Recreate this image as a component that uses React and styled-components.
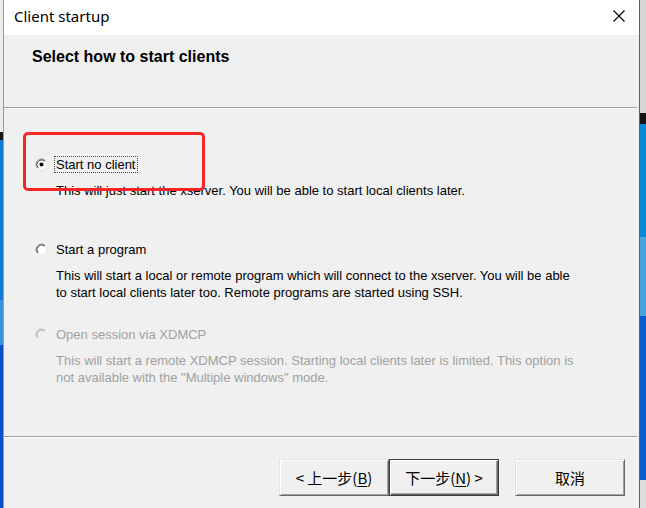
import React from 'react'
import styled, { createGlobalStyle } from 'styled-components'

const GlobalStyle = createGlobalStyle`
  html, body {
    margin: 0;
    padding: 0;
  }
  body {
    width: 646px;
    height: 508px;
    overflow: hidden;
    background: #0b4fc6;
    font-family: 'Liberation Sans', Arial, sans-serif;
  }
`

const options = [
  {
    id: 'none',
    label: 'Start no client',
    lines: ['This will just start the xserver. You will be able to start local clients later.'],
    checked: true,
    focused: true,
  },
  {
    id: 'program',
    label: 'Start a program',
    lines: [
      'This will start a local or remote program which will connect to the xserver. You will be able',
      'to start local clients later too. Remote programs are started using SSH.',
    ],
  },
  {
    id: 'xdmcp',
    label: 'Open session via XDMCP',
    lines: [
      'This will start a remote XDMCP session. Starting local clients later is limited. This option is',
      'not available with the "Multiple windows" mode.',
    ],
    disabled: true,
  },
]

const Radio = ({ checked, disabled }) => (
  <RadioMark width="13" height="13" viewBox="0 0 13 13">
    <circle cx="6.5" cy="6.5" r="5.5" fill={disabled ? '#f0f0f0' : '#fff'} />
    <path d="M2.61 10.39A5.5 5.5 0 0 1 10.39 2.61" fill="none" stroke={disabled ? '#bdbdbd' : '#8a8a8a'} />
    <path d="M10.39 2.61A5.5 5.5 0 0 1 2.61 10.39" fill="none" stroke={disabled ? '#f4f4f4' : '#e6e6e6'} />
    <path d="M3.32 9.68A4.5 4.5 0 0 1 9.68 3.32" fill="none" stroke={disabled ? '#a8a8a8' : '#404040'} />
    {checked && <circle cx="6.5" cy="6.5" r="2" fill="#000" />}
  </RadioMark>
)

const Option = ({ option }) => (
  <Choice>
    <Choice.Row>
      <Radio checked={option.checked} disabled={option.disabled} />
      <Choice.Label $focused={option.focused} $disabled={option.disabled}>
        {option.label}
      </Choice.Label>
    </Choice.Row>
    <Choice.Text $disabled={option.disabled}>
      {option.lines.map(line => (
        <div key={line}>{line}</div>
      ))}
    </Choice.Text>
  </Choice>
)

const App = () => (
  <Screen>
    <GlobalStyle />
    <DesktopEdge $side="left" />
    <Window>
      <Window.TitleBar>
        <Window.Title>Client startup</Window.Title>
        <Window.Close>
          <svg width="12" height="12" viewBox="0 0 12 12">
            <path d="M0.5 0.5L11.5 11.5M11.5 0.5L0.5 11.5" stroke="#000" strokeWidth="1.1" />
          </svg>
        </Window.Close>
      </Window.TitleBar>
      <Header>Select how to start clients</Header>
      <Separator />
      <Body>
        {options.map(option => (
          <Option key={option.id} option={option} />
        ))}
      </Body>
      <Separator />
      <Footer>
        <Footer.Pair>
          <Button>
            {'< 上一步('}<u>B</u>)
          </Button>
          <Button $default>
            下一步(<u>N</u>{') >'}
          </Button>
        </Footer.Pair>
        <Button>取消</Button>
      </Footer>
      <Highlight />
    </Window>
    <DesktopEdge $side="right" />
  </Screen>
)

const Screen = styled.div`
  display: flex;
  width: 646px;
  height: 508px;
`

const DesktopEdge = styled.div`
  flex: none;
  width: ${props => (props.$side === 'left' ? 3 : 6)}px;
  background: ${props => (props.$side === 'left'
    ? 'linear-gradient(to bottom, #ececec 0 132px, #161616 132px 140px, #1479d2 140px 300px, #3a8fd6 300px 345px, #0b4fc6 345px)'
    : 'linear-gradient(to bottom, #d6d6d6 0 113px, #161616 113px 124px, #0a88d8 124px 237px, #4aa3dc 237px 316px, #0c5bd0 316px 480px, #dcdcdc 480px)')};
`

const Window = styled.div`
  position: relative;
  flex: 1;
  display: flex;
  flex-direction: column;
  background: #f0f0f0;
  border-left: 1px solid #9c9c9c;
  border-right: 1px solid #5f5f5f;
`

Window.TitleBar = styled.div`
  display: flex;
  align-items: center;
  justify-content: space-between;
  height: 35px;
  padding-left: 10px;
  background: #fff;
`

Window.Title = styled.div`
  padding-bottom: 4px;
  font-family: 'Noto Sans', 'Liberation Sans', sans-serif;
  font-size: 15px;
  color: #000;
`

Window.Close = styled.div`
  display: flex;
  align-items: center;
  justify-content: center;
  width: 40px;
  height: 35px;
  padding-bottom: 3px;
  box-sizing: border-box;
`

const Header = styled.div`
  height: 72px;
  box-sizing: border-box;
  padding: 12px 0 0 28px;
  font-size: 16px;
  line-height: 20px;
  font-weight: 700;
  color: #000;
`

const Separator = styled.div`
  margin-right: 2px;
  border-top: 1px solid #a0a0a0;
  border-bottom: 1px solid #fff;
`

const Body = styled.div`
  flex: 1;
  display: flex;
  flex-direction: column;
  gap: 23px;
  padding: 45px 0 0 31px;
`

const Choice = styled.div`
  display: flex;
  flex-direction: column;
`

Choice.Row = styled.div`
  display: flex;
  align-items: center;
  height: 20px;
`

Choice.Label = styled.span`
  margin-left: 6px;
  padding: 0 1px;
  border: 1px dotted ${props => (props.$focused ? '#4a4a4a' : 'transparent')};
  font-size: 13px;
  line-height: 15px;
  color: ${props => (props.$disabled ? '#a0a0a0' : '#000')};
`

Choice.Text = styled.div`
  min-height: 34px;
  margin-top: 8px;
  padding-left: 21px;
  font-size: 13px;
  line-height: 17px;
  white-space: nowrap;
  color: ${props => (props.$disabled ? '#a0a0a0' : '#000')};
`

const RadioMark = styled.svg`
  flex: none;
  display: block;
`

const Footer = styled.div`
  display: flex;
  justify-content: flex-end;
  height: 70px;
  box-sizing: border-box;
  padding: 21px 14px 0 0;
`

Footer.Pair = styled.div`
  display: flex;
  margin-right: 16px;
`

const Button = styled.button`
  width: 110px;
  height: 37px;
  box-sizing: border-box;
  padding: 0;
  border: 1px solid ${props => (props.$default ? '#3c3c3c' : '#e3e3e3')};
  border-right-color: ${props => (props.$default ? '#3c3c3c' : '#696969')};
  border-bottom-color: ${props => (props.$default ? '#3c3c3c' : '#696969')};
  background: #f0f0f0;
  box-shadow: ${props => (props.$default
    ? 'inset 1px 1px #fff, inset -1px -1px #696969, inset -2px -2px #a0a0a0'
    : 'inset 1px 1px #fff, inset -1px -1px #a0a0a0')};
  font-family: 'Noto Sans CJK SC', 'Liberation Sans', sans-serif;
  font-size: 15px;
  line-height: 1;
  color: #000;
  u {
    text-underline-offset: 2px;
  }
`

const Highlight = styled.div`
  position: absolute;
  left: 19px;
  top: 132px;
  width: 182px;
  height: 59px;
  box-sizing: border-box;
  border: 3px solid #f62626;
  border-radius: 5px;
  pointer-events: none;
`

export default App
